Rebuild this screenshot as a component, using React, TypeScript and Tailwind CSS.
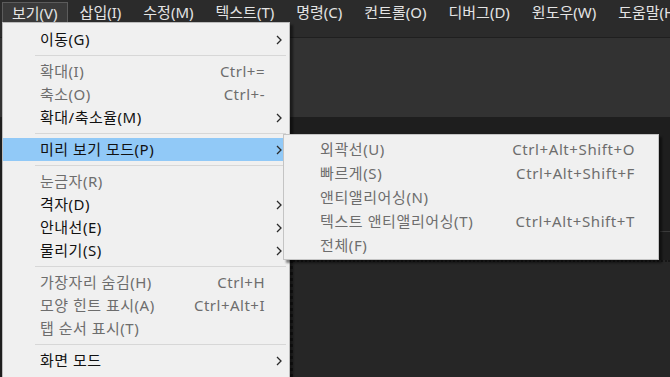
import React from "react";

type Item =
  | { sep: true }
  | { label: string; shortcut?: string; sub?: boolean; disabled?: boolean; active?: boolean };

const menuBar = ["보기(V)", "삽입(I)", "수정(M)", "텍스트(T)", "명령(C)", "컨트롤(O)", "디버그(D)", "윈도우(W)", "도움말(H)"];

const viewMenu: Item[] = [
  { label: "이동(G)", sub: true },
  { sep: true },
  { label: "확대(I)", shortcut: "Ctrl+=", disabled: true },
  { label: "축소(O)", shortcut: "Ctrl+-", disabled: true },
  { label: "확대/축소율(M)", sub: true },
  { sep: true },
  { label: "미리 보기 모드(P)", sub: true, active: true },
  { sep: true },
  { label: "눈금자(R)", disabled: true },
  { label: "격자(D)", sub: true },
  { label: "안내선(E)", sub: true },
  { label: "물리기(S)", sub: true },
  { sep: true },
  { label: "가장자리 숨김(H)", shortcut: "Ctrl+H", disabled: true },
  { label: "모양 힌트 표시(A)", shortcut: "Ctrl+Alt+I", disabled: true },
  { label: "탭 순서 표시(T)", disabled: true },
  { sep: true },
  { label: "화면 모드", sub: true },
];

const previewMenu = [
  { label: "외곽선(U)", shortcut: "Ctrl+Alt+Shift+O" },
  { label: "빠르게(S)", shortcut: "Ctrl+Alt+Shift+F" },
  { label: "앤티앨리어싱(N)" },
  { label: "텍스트 앤티앨리어싱(T)", shortcut: "Ctrl+Alt+Shift+T" },
  { label: "전체(F)" },
];

function Chevron() {
  return (
    <svg width="6" height="10" viewBox="0 0 6 10" fill="none" stroke="#2a2a2a" strokeWidth="1.3">
      <path d="M1 1l4 4-4 4" />
    </svg>
  );
}

function MenuRow({ item }: { item: Exclude<Item, { sep: true }> }) {
  return (
    <div
      className={
        "flex items-center h-[23px] mr-[5px] " +
        (item.active ? "bg-[#91c9f7] " : "") +
        (item.disabled ? "text-[#6d6d6d]" : "text-[#111]")
      }
    >
      <span className="pl-[37px] flex-1 whitespace-nowrap">{item.label}</span>
      {item.shortcut && <span className="whitespace-nowrap">{item.shortcut}</span>}
      <span className="w-[19px] flex justify-end pr-[2px]">{item.sub && <Chevron />}</span>
    </div>
  );
}

export default function App() {
  return (
    <div className="relative w-full h-[377px] overflow-hidden bg-[#1e1e1e] font-['Noto_Sans','Noto_Sans_CJK_KR',sans-serif] text-[15px] leading-none">
      {/* top bars */}
      <div className="h-[38px] bg-[#2b2b2b] border-b border-[#1f1f1f]">
        <div className="flex gap-[2px] pl-[2px] pt-[2px]">
          {menuBar.map((m, i) => (
            <div
              key={m}
              className={
                "h-[21px] px-[9px] flex items-center text-[#e4e4e4] whitespace-nowrap " +
                (i === 0 ? "bg-[#3a3a3a] border border-[#5c5c5c] border-b-0" : "border border-transparent")
              }
            >
              {m}
            </div>
          ))}
        </div>
      </div>
      <div className="h-[79px] bg-[#323232]" />
      <div className="h-[143px] bg-[#1e1e1e] flex justify-end">
        <div className="w-[10px] border-t border-[#3a3a3a] mt-[114px]" />
      </div>
      <div className="h-[117px] ml-[290px] bg-[#262626] border-l-[3px] border-t-2 border-dotted border-[#161616]" />

      {/* main dropdown */}
      <div className="absolute left-[2px] top-[22px] w-[288px] h-[360px] bg-[#f0f0f0] border border-[#bcbcbc] pt-[5px] tracking-[0.5px] shadow-[3px_3px_2px_rgba(0,0,0,0.45)]">
        {viewMenu.map((it, i) =>
          "sep" in it ? (
            <div key={i} className="h-[9px] flex items-center pl-[32px] pr-[3px]">
              <div className="h-px w-full bg-[#d7d7d7]" />
            </div>
          ) : (
            <MenuRow key={i} item={it} />
          )
        )}
      </div>

      {/* submenu */}
      <div className="absolute left-[283px] top-[134px] w-[376px] h-[126px] bg-[#f0f0f0] border border-[#c4c4c4] pt-[2px] tracking-[0.6px] shadow-[3px_3px_2px_rgba(0,0,0,0.45)]">
        {previewMenu.map((it) => (
          <div key={it.label} className="flex items-center h-[24px] text-[#6d6d6d]">
            <span className="pl-[36px] flex-1 whitespace-nowrap">{it.label}</span>
            {it.shortcut && <span className="pr-[23px] whitespace-nowrap">{it.shortcut}</span>}
          </div>
        ))}
      </div>
    </div>
  );
}
